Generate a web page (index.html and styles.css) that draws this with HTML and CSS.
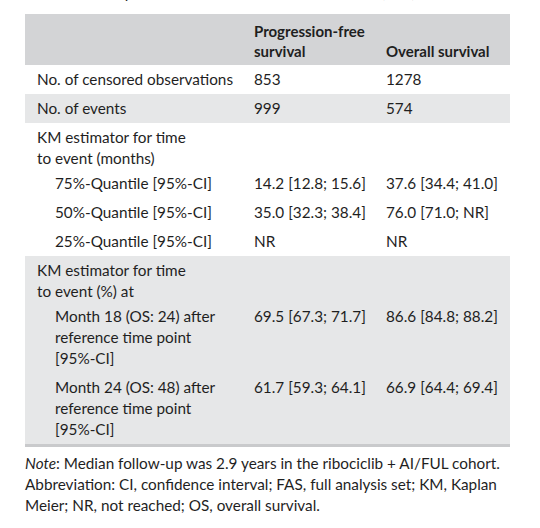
FILE: index.html
```html
<!DOCTYPE html>
<html lang="en">
<head>
    <meta charset="UTF-8">
    <title>KM estimates</title>
    <link rel="stylesheet" href="styles.css">
</head>
<body>
<div id="tablediv">
    <p class="caption"><b>TABLE 2</b> Kaplan-Meier estimates of time to event (FAS)</p>
    <table class="results">
        <colgroup>
            <col class="col-label">
            <col class="col-pfs">
            <col class="col-os">
        </colgroup>
        <thead>
            <tr>
                <th></th>
                <th>Progression-free<br>survival</th>
                <th>Overall survival</th>
            </tr>
        </thead>
        <tbody>
            <tr>
                <td>No. of censored observations</td>
                <td>853</td>
                <td>1278</td>
            </tr>
            <tr class="band">
                <td>No. of events</td>
                <td>999</td>
                <td>574</td>
            </tr>
            <tr class="group">
                <td>KM estimator for time<br>to event (months)</td>
                <td></td>
                <td></td>
            </tr>
            <tr>
                <td class="sub">75%-Quantile [95%-CI]</td>
                <td>14.2 [12.8; 15.6]</td>
                <td>37.6 [34.4; 41.0]</td>
            </tr>
            <tr>
                <td class="sub">50%-Quantile [95%-CI]</td>
                <td>35.0 [32.3; 38.4]</td>
                <td>76.0 [71.0; NR]</td>
            </tr>
            <tr>
                <td class="sub">25%-Quantile [95%-CI]</td>
                <td>NR</td>
                <td>NR</td>
            </tr>
            <tr class="band group">
                <td>KM estimator for time<br>to event (%) at</td>
                <td></td>
                <td></td>
            </tr>
            <tr class="band">
                <td class="sub">Month 18 (OS: 24) after<br>reference time point<br>[95%-CI]</td>
                <td>69.5 [67.3; 71.7]</td>
                <td>86.6 [84.8; 88.2]</td>
            </tr>
            <tr class="band last">
                <td class="sub">Month 24 (OS: 48) after<br>reference time point<br>[95%-CI]</td>
                <td>61.7 [59.3; 64.1]</td>
                <td>66.9 [64.4; 69.4]</td>
            </tr>
        </tbody>
    </table>
    <p class="note"><i>Note</i>: Median follow-up was 2.9 years in the ribociclib + AI/FUL cohort.
        Abbreviation: CI, confidence interval; FAS, full analysis set; KM, Kaplan
        Meier; NR, not reached; OS, overall survival.</p>
</div>
</body>
</html>
```

FILE: styles.css
```css
body {
    margin: 0;
    background: #ffffff;
    color: #1f1f1f;
    font-family: 'Lato', 'Liberation Sans', sans-serif;
    font-size: 15.3px;
    line-height: 21px;
}
#tablediv {
    width: 485px;
    margin-left: 25px;
}
.caption {
    margin: -18px 0 11px 0;
    padding-left: 20px;
    white-space: nowrap;
}
.results {
    width: 100%;
    border-collapse: collapse;
    table-layout: fixed;
}
.col-label {
    width: 217px;
}
.col-pfs {
    width: 132px;
}
.results th,
.results td {
    padding: 4px 0 4px 12px;
    text-align: left;
    vertical-align: top;
    white-space: nowrap;
}
.results th {
    padding-top: 7px;
    background-color: #d3d4d6;
    font-size: 15px;
    font-weight: bold;
    line-height: 20px;
    vertical-align: bottom;
}
.band td {
    background-color: #e6e7e8;
}
.group td {
    padding-bottom: 0;
}
.results td.sub {
    padding-left: 30px;
}
.last td {
    border-bottom: 3px solid #c9cacc;
}
.note {
    margin: 6px 0 0 0;
}
```
